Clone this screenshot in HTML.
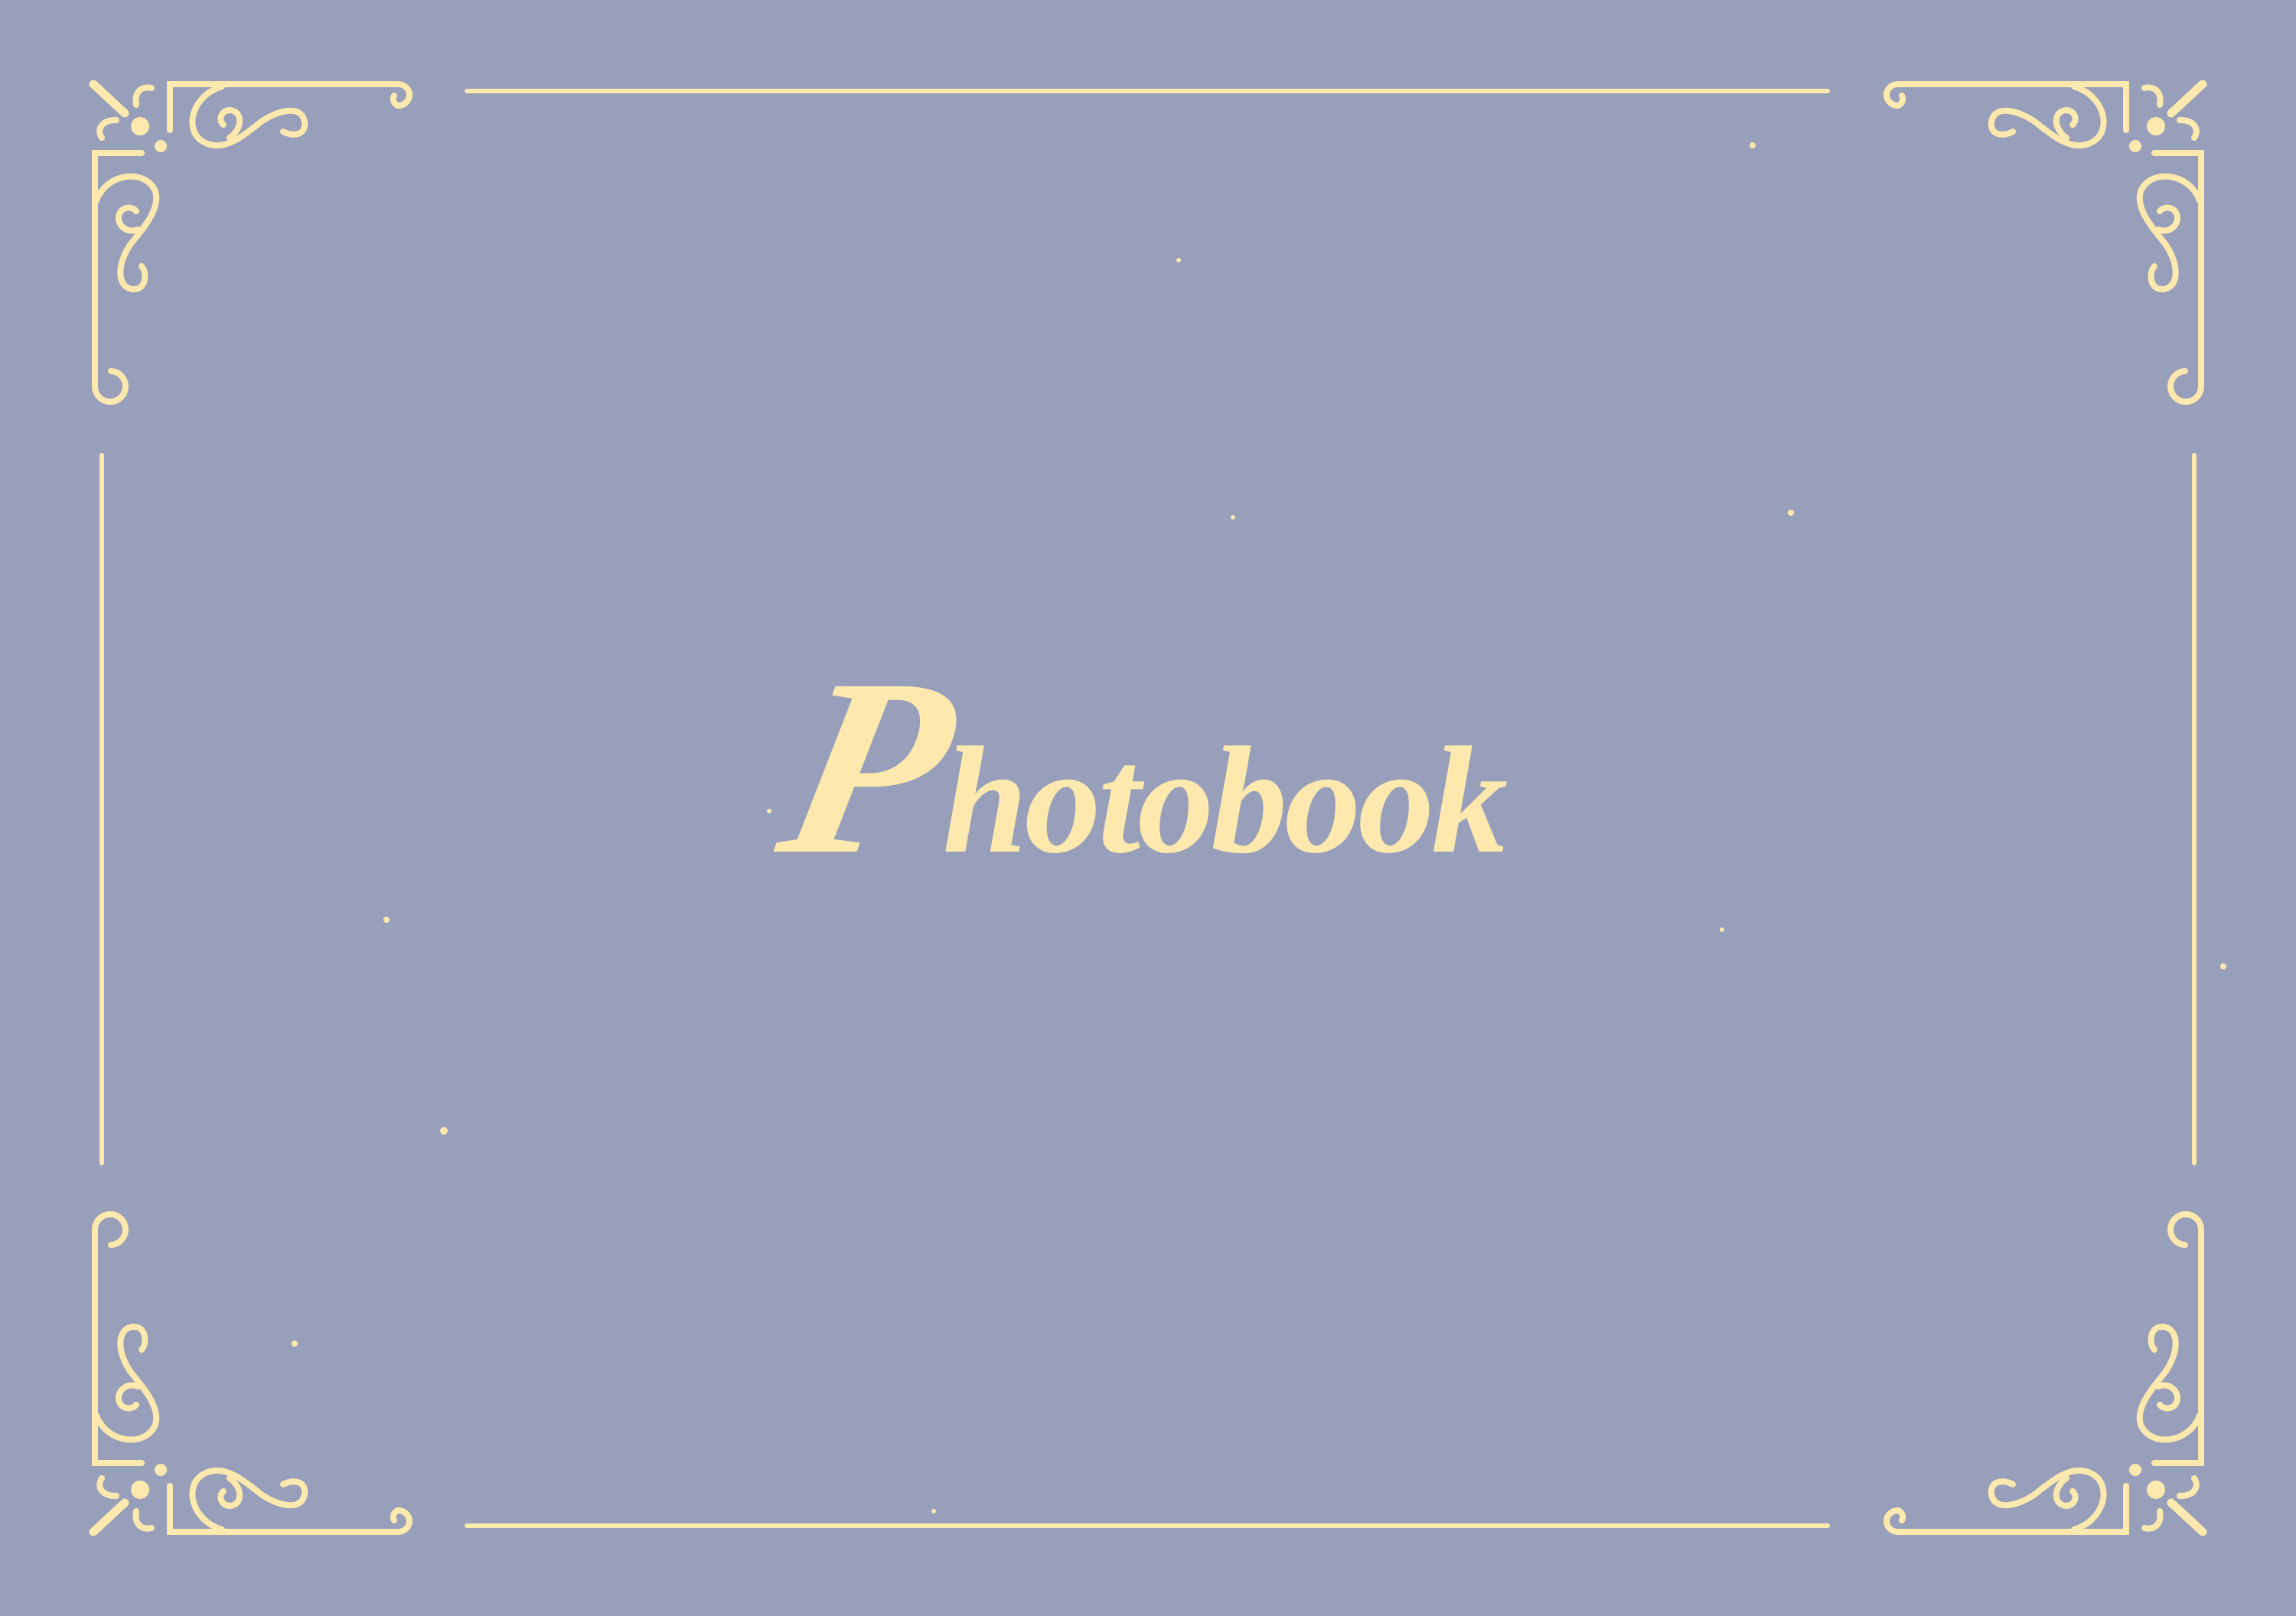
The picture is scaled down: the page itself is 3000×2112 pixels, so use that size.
<!DOCTYPE html>
<html><head><meta charset="utf-8"><style>
html,body{margin:0;padding:0;background:#979fbb;}
body{width:3000px;height:2112px;position:relative;overflow:hidden;}
svg{position:absolute;left:0;top:0;}
.t{position:absolute;left:0;width:3000px;top:853px;text-align:center;color:#fde9ad;font-family:"Liberation Serif",serif;font-style:italic;font-weight:bold;font-size:200px;line-height:300px;letter-spacing:-4px;}
.t span{font-size:330px;display:inline-block;transform:skewX(-12deg);}
</style></head><body>
<svg width="3000" height="2112" viewBox="0 0 3000 2112">
<defs>
<g id="c" fill="none" stroke="#fde9ad" stroke-width="8" stroke-linecap="round">
<path d="M222 170 V110 H520 A15 14 0 0 1 520 138 A9 9 0 0 1 515 125"/>
<path d="M290 113 C250 125 240 170 265 185 C290 200 315 180 340 160 C360 145 395 135 398 160 C400 175 385 180 370 172"/>
<path d="M292 163 C283 155 292 140 305 145 C318 150 315 170 300 180"/>
<path d="M185 200 H124 V505 A20 20 0 1 0 145 485"/>
<path d="M126 262 C140 225 190 220 203 250 C210 275 185 300 170 320 C150 350 155 378 175 378 C192 378 192 355 185 348"/>
<path d="M178 276 C170 267 155 272 155 285 C155 298 170 305 180 300"/>
<circle cx="183" cy="165" r="12" fill="#fde9ad" stroke="none"/>
<circle cx="210" cy="191" r="8" fill="#fde9ad" stroke="none"/>
<path d="M122 110 L163 148" stroke-width="11"/>
<path d="M178 137 C175 120 185 112 198 115" stroke-width="8"/>
<path d="M152 157 C135 156 125 168 133 180" stroke-width="8"/>
</g>
</defs>
<g stroke="#fde9ad" stroke-width="6" stroke-linecap="round">
<line x1="610" y1="119" x2="2388" y2="119"/>
<line x1="610" y1="1994" x2="2388" y2="1994"/>
<line x1="133" y1="595" x2="133" y2="1520"/>
<line x1="2867" y1="595" x2="2867" y2="1520"/>
</g>
<use href="#c"/>
<use href="#c" transform="matrix(-1 0 0 1 3000 0)"/>
<use href="#c" transform="matrix(1 0 0 -1 0 2112)"/>
<use href="#c" transform="matrix(-1 0 0 -1 3000 2112)"/>
<g fill="#fde9ad">
<circle cx="505" cy="1202" r="4"/><circle cx="1005" cy="1060" r="3"/><circle cx="1540" cy="340" r="3"/>
<circle cx="1611" cy="676" r="3"/><circle cx="580" cy="1478" r="5"/><circle cx="2290" cy="190" r="4"/>
<circle cx="2340" cy="670" r="4"/><circle cx="385" cy="1756" r="4"/><circle cx="2250" cy="1215" r="3"/>
<circle cx="1220" cy="1975" r="3"/><circle cx="2905" cy="1263" r="4"/>
</g>
</svg>
<div class="t"><span>P</span>hotobook</div>
</body></html>
